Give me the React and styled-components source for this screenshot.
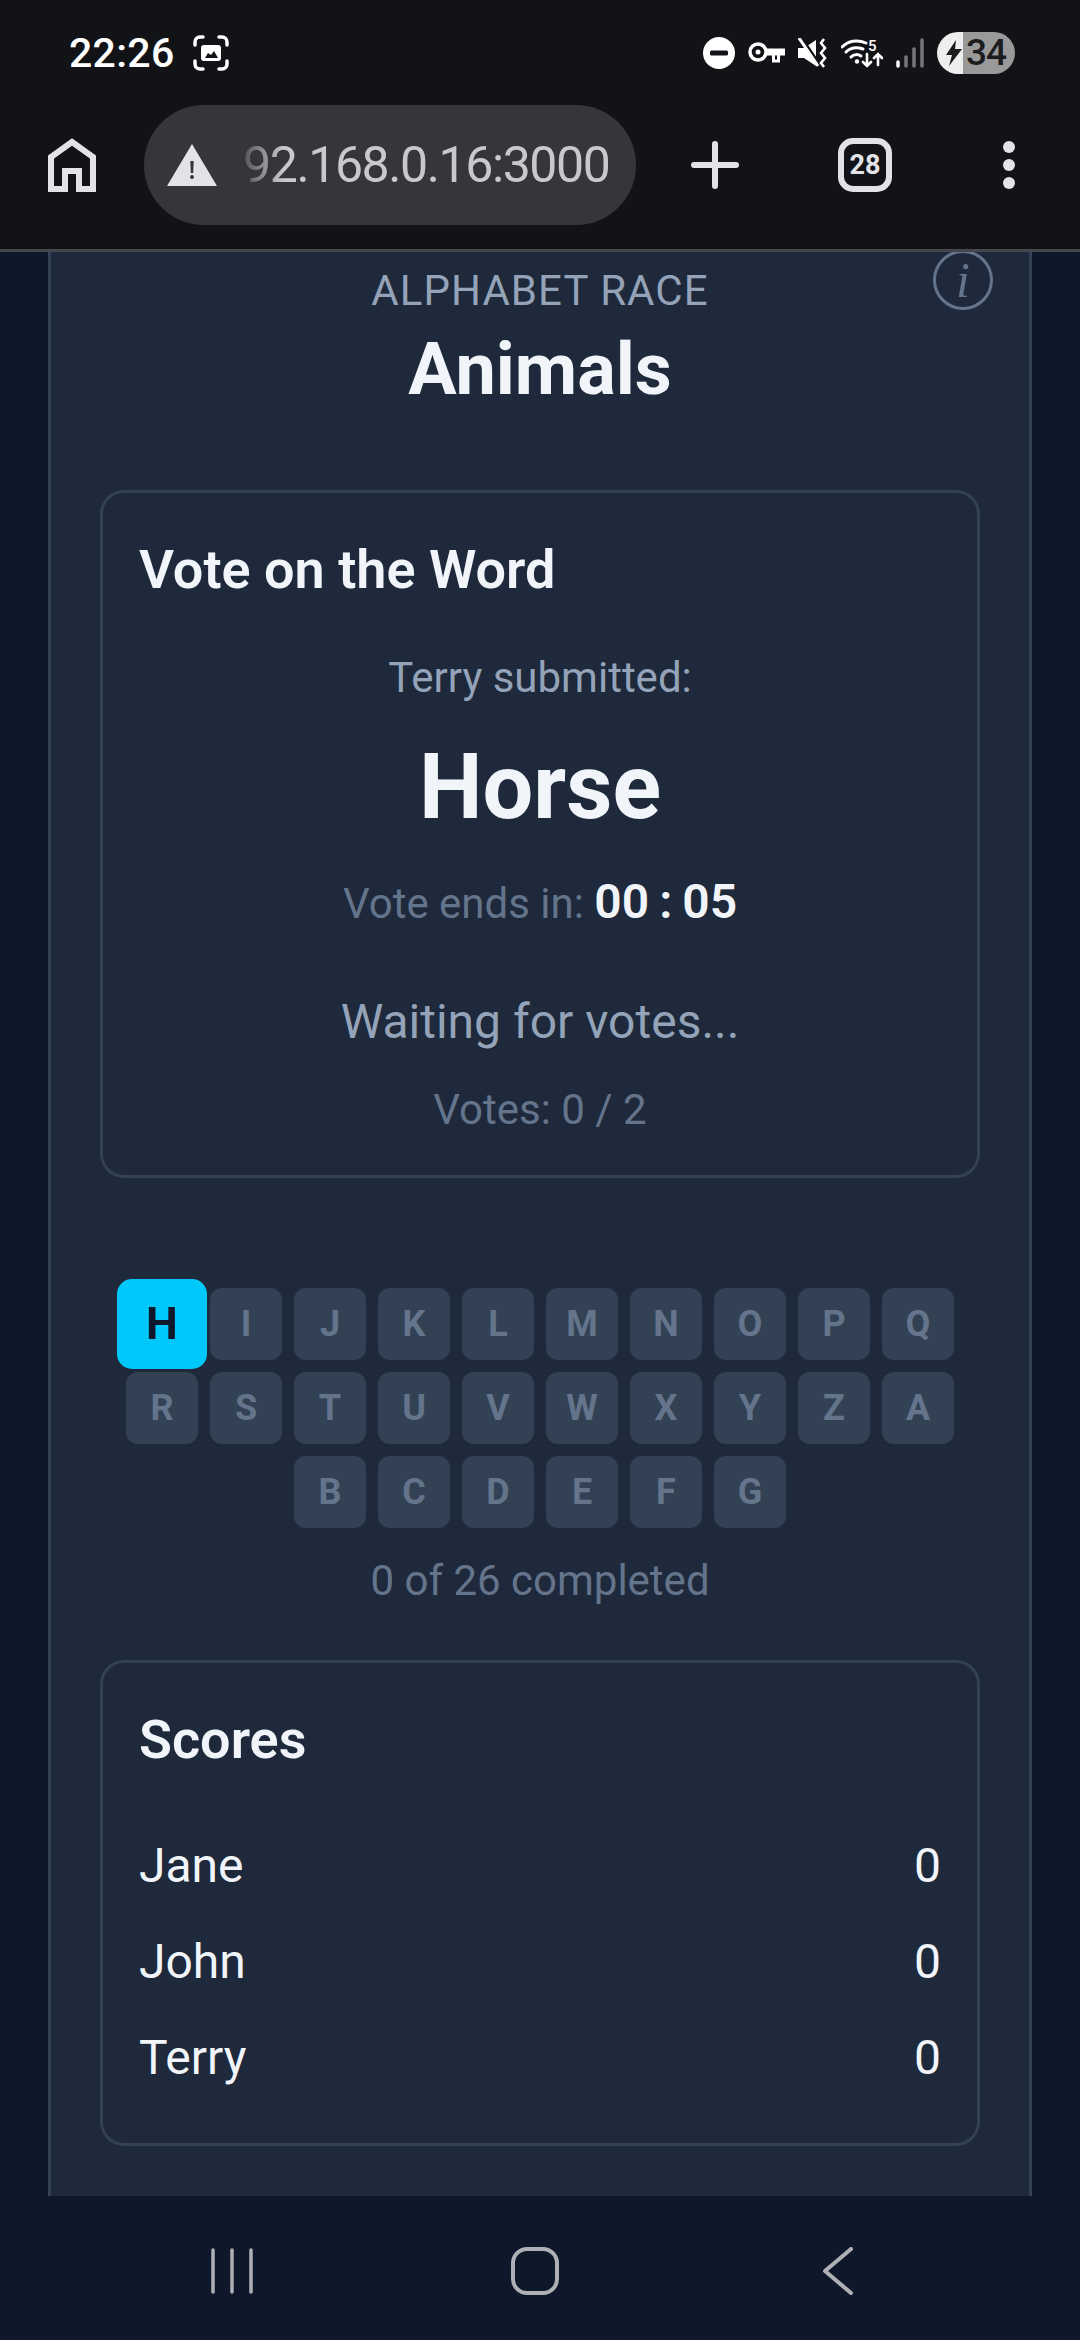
import React from 'react'
import styled, { createGlobalStyle } from 'styled-components'

const GlobalStyle = createGlobalStyle`
  html, body { margin: 0; padding: 0; background: #0f172a; }
  * { box-sizing: border-box; }
`

const LETTERS = 'HIJKLMNOPQRSTUVWXYZABCDEFG'.split('')
const SCORES = [
  { name: 'Jane', score: 0 },
  { name: 'John', score: 0 },
  { name: 'Terry', score: 0 },
]

const ScreenshotIcon = () => (
  <svg width="36" height="36" viewBox="0 0 36 36" fill="none" stroke="#fff" strokeWidth="3.5" strokeLinecap="round">
    <path d="M2 10V7a5 5 0 0 1 5-5h3M26 2h3a5 5 0 0 1 5 5v3M34 26v3a5 5 0 0 1-5 5h-3M10 34H7a5 5 0 0 1-5-5v-3" />
    <rect x="8" y="10" width="20" height="16" rx="3" fill="#fff" stroke="none" />
    <path d="M12 23l3-5 3 2 3-4 4 7z" fill="#121317" stroke="none" />
  </svg>
)

const DndIcon = () => (
  <svg width="32" height="32" viewBox="0 0 32 32">
    <circle cx="16" cy="16" r="16" fill="#fff" />
    <rect x="7" y="13.5" width="18" height="5" rx="1.5" fill="#121317" />
  </svg>
)

const KeyIcon = () => (
  <svg width="37" height="24" viewBox="0 0 37 24" fill="none">
    <circle cx="10" cy="11" r="8" stroke="#fff" strokeWidth="3.5" />
    <circle cx="10" cy="11" r="2.5" fill="#fff" />
    <path d="M18 7.5h19v7h-5v7h-8v-7h-6z" fill="#fff" />
    <path d="M27 14.5h2v4h-2z" fill="#121317" />
  </svg>
)

const MuteIcon = () => (
  <svg width="30" height="30" viewBox="0 0 30 30" fill="none">
    <path d="M0 10h6l12-8v26L6 20H0z" fill="#fff" />
    <path d="M3 0l19 28" stroke="#121317" strokeWidth="4" />
    <path d="M1 0l19 28" stroke="#fff" strokeWidth="3" />
    <path d="M26 1l-3 4 4 5-4 5 4 5-4 5 3 4" stroke="#fff" strokeWidth="2.6" />
  </svg>
)

const WifiIcon = () => (
  <svg width="42" height="31" viewBox="0 0 42 31" fill="none" stroke="#fff" strokeLinecap="round">
    <path d="M1 10C7 4 16 2 25 6" strokeWidth="3" />
    <path d="M5 15c5-5 11-5 17-3" strokeWidth="3" />
    <path d="M10 20c3-3 7-3 10-1" strokeWidth="3" />
    <circle cx="16" cy="24.5" r="2.2" fill="#fff" stroke="none" />
    <path d="M26 17v12M22 25l4 4 4-4M37 28V17M33 21l4-4 4 4" strokeWidth="2.6" />
    <text x="27" y="14" fontFamily="Roboto, sans-serif" fontSize="15" fontWeight="500" fill="#fff" stroke="none">5</text>
  </svg>
)

const SignalIcon = () => (
  <svg width="28" height="30" viewBox="0 0 28 30" fill="none" strokeLinecap="round" strokeWidth="3.5">
    <path d="M2 24v4" stroke="#fff" />
    <path d="M10 19v9M18 11v17M26 2v26" stroke="#77787c" />
  </svg>
)

const HomeIcon = () => (
  <svg width="48" height="54" viewBox="0 0 48 54" fill="none" stroke="#e2e3e8" strokeWidth="6">
    <path d="M3 51V19L24 4l21 15v32H31V33H17v18z" />
  </svg>
)

const WarningIcon = () => (
  <svg width="50" height="42" viewBox="0 0 50 42">
    <path d="M25 0l25 42H0z" fill="#e2e3e8" />
    <path d="M23.3 17h3.4l-.5 12h-2.4z" fill="#35363a" />
    <circle cx="25" cy="33" r="2" fill="#35363a" />
  </svg>
)

const PlusIcon = () => (
  <svg width="48" height="48" viewBox="0 0 48 48" stroke="#e2e3e8" strokeWidth="6" strokeLinecap="round">
    <path d="M24 3v42M3 24h42" />
  </svg>
)

const MoreIcon = () => (
  <svg width="12" height="48" viewBox="0 0 12 48" fill="#e2e3e8">
    <circle cx="6" cy="6" r="6" />
    <circle cx="6" cy="24" r="6" />
    <circle cx="6" cy="42" r="6" />
  </svg>
)

const RecentsIcon = () => (
  <svg width="44" height="48" viewBox="0 0 44 48" stroke="#aeb0b6" strokeWidth="3.5" strokeLinecap="round">
    <path d="M3 3v42M22 3v42M41 3v42" />
  </svg>
)

const NavHomeIcon = () => (
  <svg width="48" height="48" viewBox="0 0 48 48" fill="none" stroke="#aeb0b6" strokeWidth="4">
    <rect x="2" y="2" width="44" height="44" rx="14" />
  </svg>
)

const BackIcon = () => (
  <svg width="30" height="48" viewBox="0 0 30 48" fill="none" stroke="#aeb0b6" strokeWidth="4" strokeLinecap="round" strokeLinejoin="round">
    <path d="M28 2L2 24l26 22" />
  </svg>
)

const App = () => {
  return (
    <Screen>
      <GlobalStyle />
      <BrowserChrome>
        <StatusBar>
          <StatusLeft>
            <Clock>22:26</Clock>
            <ScreenshotIcon />
          </StatusLeft>
          <StatusRight>
            <DndIcon />
            <KeyIcon />
            <MuteIcon />
            <WifiIcon />
            <SignalIcon />
            <Battery>
              <Bolt viewBox="0 0 16 26" width="16" height="26">
                <path d="M10 0L0 15h6l-3 11L16 9H9z" fill="#1c1c1e" />
              </Bolt>
              <BatteryLevel>34</BatteryLevel>
            </Battery>
          </StatusRight>
        </StatusBar>
        <Toolbar>
          <HomeIcon />
          <UrlPill>
            <WarningIcon />
            <UrlText>92.168.0.16:3000</UrlText>
          </UrlPill>
          <PlusSlot><PlusIcon /></PlusSlot>
          <TabCount>28</TabCount>
          <MoreSlot><MoreIcon /></MoreSlot>
        </Toolbar>
      </BrowserChrome>

      <Viewport>
        <Panel>
          <InfoButton>i</InfoButton>
          <GameHeader>
            <GameKind>ALPHABET RACE</GameKind>
            <GameTitle>Animals</GameTitle>
          </GameHeader>

          <VoteCard>
            <CardTitle>Vote on the Word</CardTitle>
            <VoteBody>
              <Submitter>Terry submitted:</Submitter>
              <Word>Horse</Word>
              <Countdown>
                Vote ends in: <Time>00<TimeColon>:</TimeColon>05</Time>
              </Countdown>
              <Waiting>Waiting for votes...</Waiting>
              <VoteCount>Votes: 0 / 2</VoteCount>
            </VoteBody>
          </VoteCard>

          <LetterGrid>
            {LETTERS.map((letter) => (
              <Letter key={letter} $active={letter === 'H'}>{letter}</Letter>
            ))}
          </LetterGrid>
          <Progress>0 of 26 completed</Progress>

          <ScoreCard>
            <CardTitle>Scores</CardTitle>
            <ScoreList>
              {SCORES.map((row) => (
                <ScoreRow key={row.name}>
                  <span>{row.name}</span>
                  <span>{row.score}</span>
                </ScoreRow>
              ))}
            </ScoreList>
          </ScoreCard>
        </Panel>
      </Viewport>

      <NavBar>
        <NavSlot><RecentsIcon /></NavSlot>
        <NavSlot><NavHomeIcon /></NavSlot>
        <NavSlot><BackIcon /></NavSlot>
      </NavBar>
    </Screen>
  )
}

export default App

const Screen = styled.div`
  width: 1080px;
  height: 2340px;
  display: flex;
  flex-direction: column;
  overflow: hidden;
  background: #0f172a;
  font-family: Roboto, 'Liberation Sans', sans-serif;
`

const BrowserChrome = styled.header`
  height: 252px;
  flex: none;
  background: #121317;
  border-bottom: 3px solid #45464e;
`

const StatusBar = styled.div`
  height: 105px;
  padding: 0 65px 0 69px;
  display: flex;
  align-items: center;
  justify-content: space-between;
`

const StatusLeft = styled.div`
  display: flex;
  align-items: center;
  gap: 18px;
`

const Clock = styled.span`
  color: #fff;
  font-size: 41px;
  font-weight: 500;
  letter-spacing: 0.3px;
`

const StatusRight = styled.div`
  display: flex;
  align-items: center;
  gap: 13px;
`

const Battery = styled.div`
  width: 78px;
  height: 42px;
  border-radius: 21px;
  display: flex;
  align-items: center;
  gap: 4px;
  padding-left: 9px;
  background: linear-gradient(90deg, #eeeeee 26px, #999999 26px);
`

const Bolt = styled.svg`
  flex: none;
`

const BatteryLevel = styled.span`
  color: #1c1c1e;
  font-size: 37px;
  font-weight: 500;
  letter-spacing: -1px;
`

const Toolbar = styled.div`
  height: 144px;
  padding: 0 0 24px 48px;
  display: flex;
  align-items: center;
`

const UrlPill = styled.div`
  width: 492px;
  height: 120px;
  margin-left: 48px;
  padding-left: 23px;
  border-radius: 60px;
  background: #35363a;
  display: flex;
  align-items: center;
  gap: 26px;
`

const UrlText = styled.span`
  color: #c8c9ce;
  font-size: 50px;
  letter-spacing: -1.4px;
  -webkit-mask-image: linear-gradient(90deg, rgba(0, 0, 0, 0.2) 0, #000 40px);
  mask-image: linear-gradient(90deg, rgba(0, 0, 0, 0.2) 0, #000 40px);
`

const PlusSlot = styled.div`
  margin-left: 55px;
  display: flex;
`

const TabCount = styled.div`
  width: 54px;
  height: 54px;
  margin-left: 99px;
  border: 6px solid #e2e3e8;
  border-radius: 15px;
  color: #e2e3e8;
  font-size: 27px;
  font-weight: 700;
  display: flex;
  align-items: center;
  justify-content: center;
`

const MoreSlot = styled.div`
  margin-left: 111px;
  display: flex;
`

const Viewport = styled.main`
  flex: 1;
  min-height: 0;
  overflow: hidden;
  padding: 0 48px;
`

const Panel = styled.section`
  position: relative;
  height: 100%;
  padding: 0 49px;
  background: #1e293b;
  border-left: 3px solid #334155;
  border-right: 3px solid #334155;
`

const InfoButton = styled.div`
  position: absolute;
  top: -2px;
  right: 36px;
  width: 60px;
  height: 60px;
  border-radius: 50%;
  border: 3px solid #64748b;
  color: #64748b;
  font-family: 'Liberation Serif', serif;
  font-style: italic;
  font-size: 50px;
  display: flex;
  align-items: center;
  justify-content: center;
`

const GameHeader = styled.div`
  text-align: center;
  padding-top: 15px;
`

const GameKind = styled.div`
  color: #94a3b8;
  font-size: 42px;
  line-height: 48px;
  letter-spacing: 1.05px;
`

const GameTitle = styled.h1`
  margin: 13px 0 0;
  color: #f1f5f9;
  font-size: 72px;
  line-height: 84px;
  font-weight: 700;
`

const Card = styled.div`
  border: 3px solid #334155;
  border-radius: 24px;
  padding: 42px 36px;
`

const VoteCard = styled(Card)`
  height: 688px;
  margin-top: 78px;
`

const CardTitle = styled.h2`
  margin: 0;
  color: #f1f5f9;
  font-size: 54px;
  line-height: 70px;
  font-weight: 600;
`

const VoteBody = styled.div`
  text-align: center;
`

const Submitter = styled.div`
  margin-top: 46px;
  color: #94a3b8;
  font-size: 42px;
  line-height: 54px;
`

const Word = styled.div`
  margin-top: 23px;
  color: #f1f5f9;
  font-size: 90px;
  line-height: 120px;
  font-weight: 700;
`

const Countdown = styled.div`
  margin-top: 24px;
  color: #64748b;
  font-size: 42px;
  line-height: 60px;
`

const Time = styled.span`
  color: #f1f5f9;
  font-size: 48px;
  font-weight: 600;
`

const TimeColon = styled.span`
  margin: 0 10px;
`

const Waiting = styled.div`
  margin-top: 58px;
  color: #94a3b8;
  font-size: 48px;
  line-height: 60px;
`

const VoteCount = styled.div`
  margin-top: 28px;
  color: #64748b;
  font-size: 42px;
  line-height: 60px;
`

const LetterGrid = styled.div`
  margin-top: 110px;
  display: flex;
  flex-wrap: wrap;
  justify-content: center;
  gap: 12px;
  padding: 0 26px;
`

const Letter = styled.div`
  width: 72px;
  height: 72px;
  border-radius: 12px;
  background: ${(p) => (p.$active ? '#00c8fa' : '#334155')};
  color: ${(p) => (p.$active ? '#0f172a' : '#64748b')};
  font-size: 36px;
  font-weight: 700;
  display: flex;
  align-items: center;
  justify-content: center;
  transform: ${(p) => (p.$active ? 'scale(1.25)' : 'none')};
`

const Progress = styled.div`
  margin-top: 23px;
  text-align: center;
  color: #64748b;
  font-size: 42px;
  line-height: 60px;
`

const ScoreCard = styled(Card)`
  height: 486px;
  margin-top: 49px;
`

const ScoreList = styled.div`
  margin-top: 42px;
  display: flex;
  flex-direction: column;
`

const ScoreRow = styled.div`
  height: 96px;
  display: flex;
  align-items: center;
  justify-content: space-between;
  color: #f1f5f9;
  font-size: 48px;
`

const NavBar = styled.nav`
  height: 144px;
  flex: none;
  padding: 6px 0 0 80px;
  background: #0f172a;
  display: grid;
  grid-template-columns: repeat(3, 303px);
  justify-items: center;
  align-items: center;
`

const NavSlot = styled.div`
  display: flex;
`
